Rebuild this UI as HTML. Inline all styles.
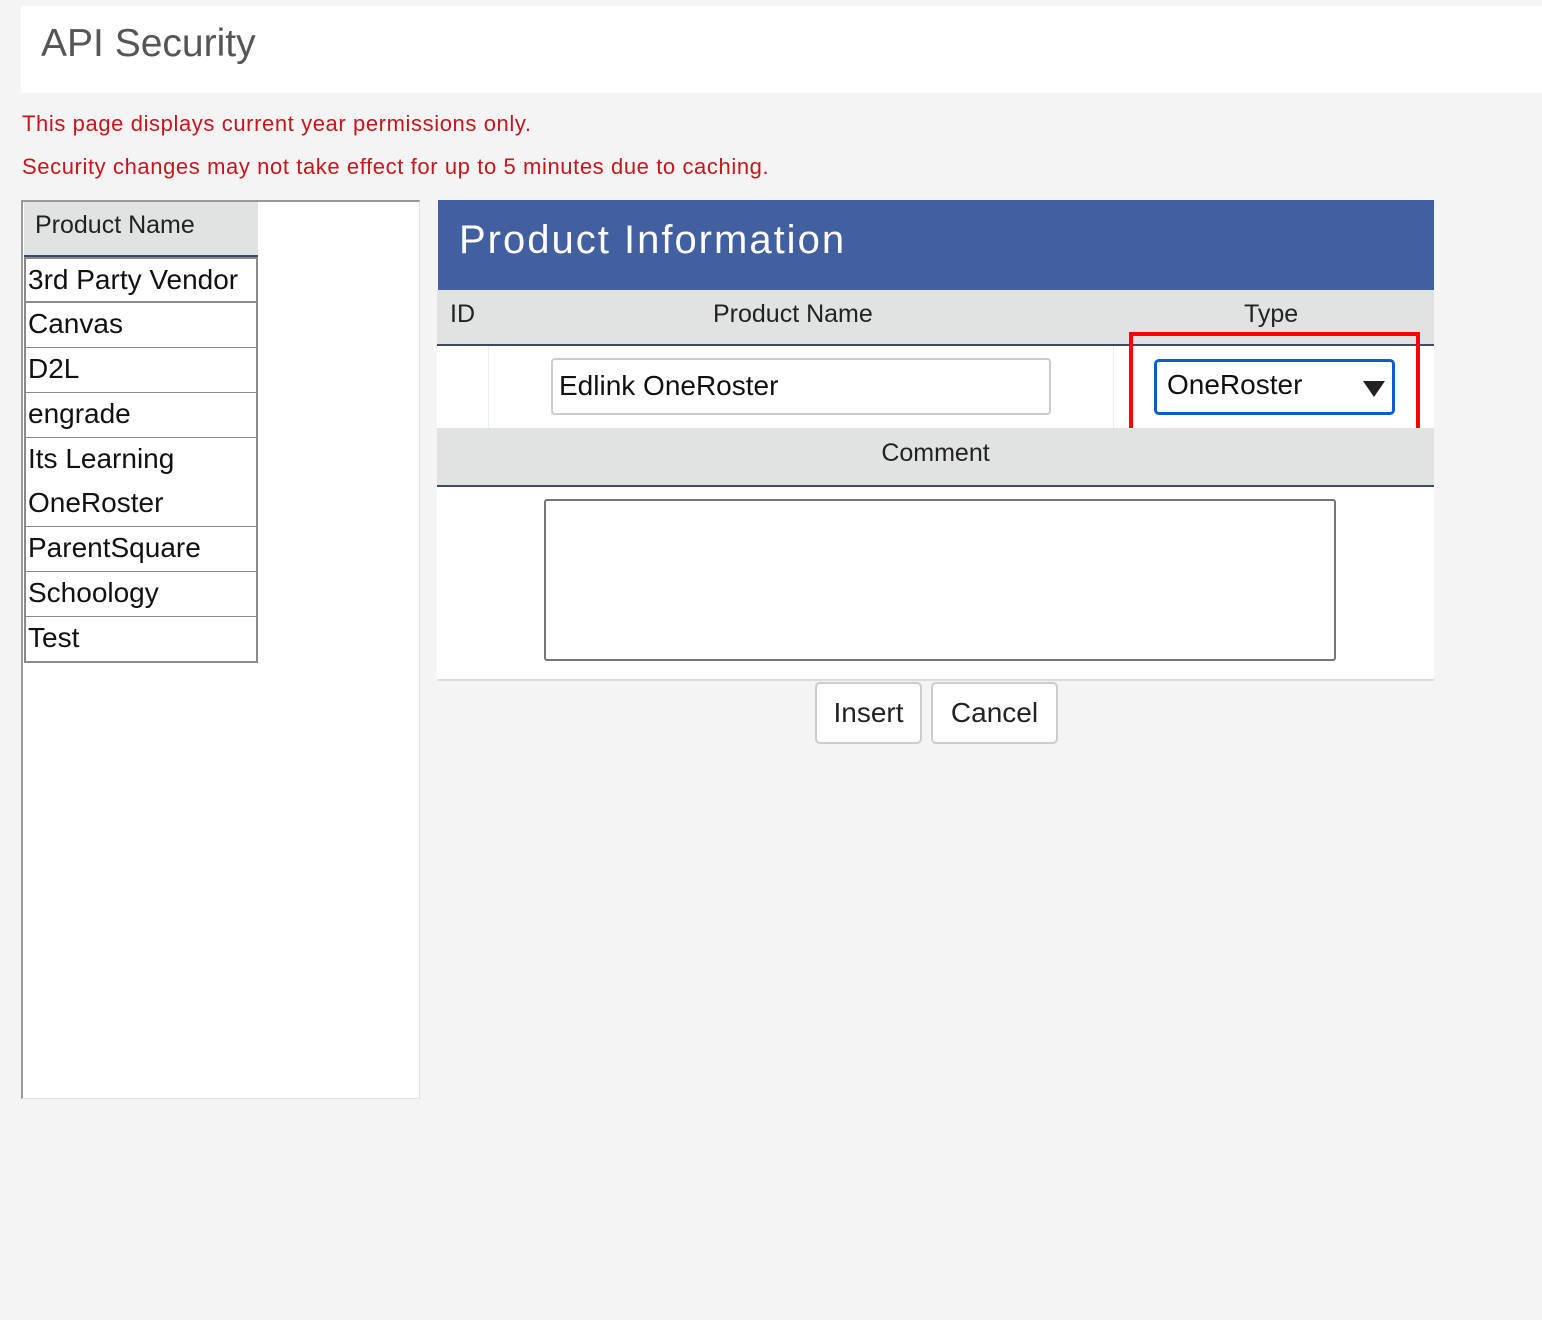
<!DOCTYPE html>
<html><head><style>
body{margin:0;width:1542px;height:1320px;background:#f4f4f4;font-family:"Liberation Sans",sans-serif;position:relative;overflow:hidden}
.a{position:absolute;box-sizing:border-box}
.red{color:#c4161c;font-size:22px;letter-spacing:.6px}
.row{position:absolute;left:24px;width:234px;height:46px;border:2px solid #8a8a8a;border-top:none;background:#fff;font-size:28px;color:#111;line-height:42px;padding-left:2px;box-sizing:border-box}
.btn{position:absolute;top:682px;height:62px;border:2px solid #ccc;border-radius:5px;background:#fff;font-size:28px;color:#222;text-align:center;line-height:58px;box-sizing:border-box}
</style></head><body>
<div class="a" style="left:21px;top:6px;width:1521px;height:87px;background:#fff"></div>
<div class="a" style="left:41px;top:22px;font-size:39px;color:#555">API Security</div>
<div class="a red" style="left:22px;top:111px">This page displays current year permissions only.</div>
<div class="a red" style="left:22px;top:154px">Security changes may not take effect for up to 5 minutes due to caching.</div>

<div class="a" style="left:21px;top:200px;width:399px;height:899px;background:#fff;border-left:2px solid #999;border-top:2px solid #999;border-right:1px solid #e2e2e2;border-bottom:1px solid #e2e2e2"></div>
<div class="a" style="left:24px;top:202px;width:234px;height:55px;background:#e1e3e2;border-bottom:2px solid #3c4a63;font-size:25px;color:#222;padding:9px 0 0 11px">Product Name</div>
<div class="row" style="top:257px;border-top:2px solid #8a8a8a">3rd Party Vendor</div>
<div class="row" style="top:303px">Canvas</div>
<div class="row" style="top:348px">D2L</div>
<div class="row" style="top:393px">engrade</div>
<div class="row" style="top:438px">Its Learning</div>
<div class="row" style="top:482px">OneRoster</div>
<div class="row" style="top:527px">ParentSquare</div>
<div class="row" style="top:572px">Schoology</div>
<div class="row" style="top:617px">Test</div>

<div class="a" style="left:438px;top:200px;width:996px;height:90px;background:#4260a0;color:#fff;font-size:40px;letter-spacing:2px;padding:18px 0 0 21px">Product Information</div>
<div class="a" style="left:437px;top:290px;width:997px;height:56px;background:#e1e3e2;border-bottom:2px solid #3c4a63;font-size:25px;color:#222">
<span class="a" style="left:13px;top:10px">ID</span>
<span class="a" style="left:276px;top:10px">Product Name</span>
<span class="a" style="left:807px;top:10px">Type</span></div>
<div class="a" style="left:437px;top:346px;width:997px;height:82px;background:#fff"></div>
<div class="a" style="left:488px;top:346px;width:1px;height:82px;background:#e6eef0"></div>
<div class="a" style="left:1113px;top:346px;width:1px;height:82px;background:#e6eef0"></div>
<div class="a" style="left:551px;top:358px;width:500px;height:57px;border:2px solid #ccc;border-radius:4px;background:#fff;font-size:28px;color:#111;padding:10px 0 0 6px">Edlink OneRoster</div>
<div class="a" style="left:1154px;top:359px;width:241px;height:56px;border:3px solid #0a5ccc;border-radius:5px;background:#fff;font-size:28px;color:#111;padding:7px 0 0 10px">OneRoster<span class="a" style="left:206px;top:19px;width:0;height:0;border-left:11px solid transparent;border-right:11px solid transparent;border-top:16px solid #222"></span></div>
<div class="a" style="left:1129px;top:332px;width:291px;height:101px;border:4px solid #f00"></div>
<div class="a" style="left:437px;top:428px;width:997px;height:59px;background:#e1e3e2;border-bottom:2px solid #3c4a63;font-size:25px;color:#222;text-align:center;padding-top:11px">Comment</div>
<div class="a" style="left:437px;top:487px;width:997px;height:194px;background:#fff;border-bottom:2px solid #ddd"></div>
<div class="a" style="left:544px;top:499px;width:792px;height:162px;border:2px solid #777;border-radius:3px;background:#fff"></div>
<div class="btn" style="left:815px;width:107px">Insert</div>
<div class="btn" style="left:931px;width:127px">Cancel</div>
</body></html>
